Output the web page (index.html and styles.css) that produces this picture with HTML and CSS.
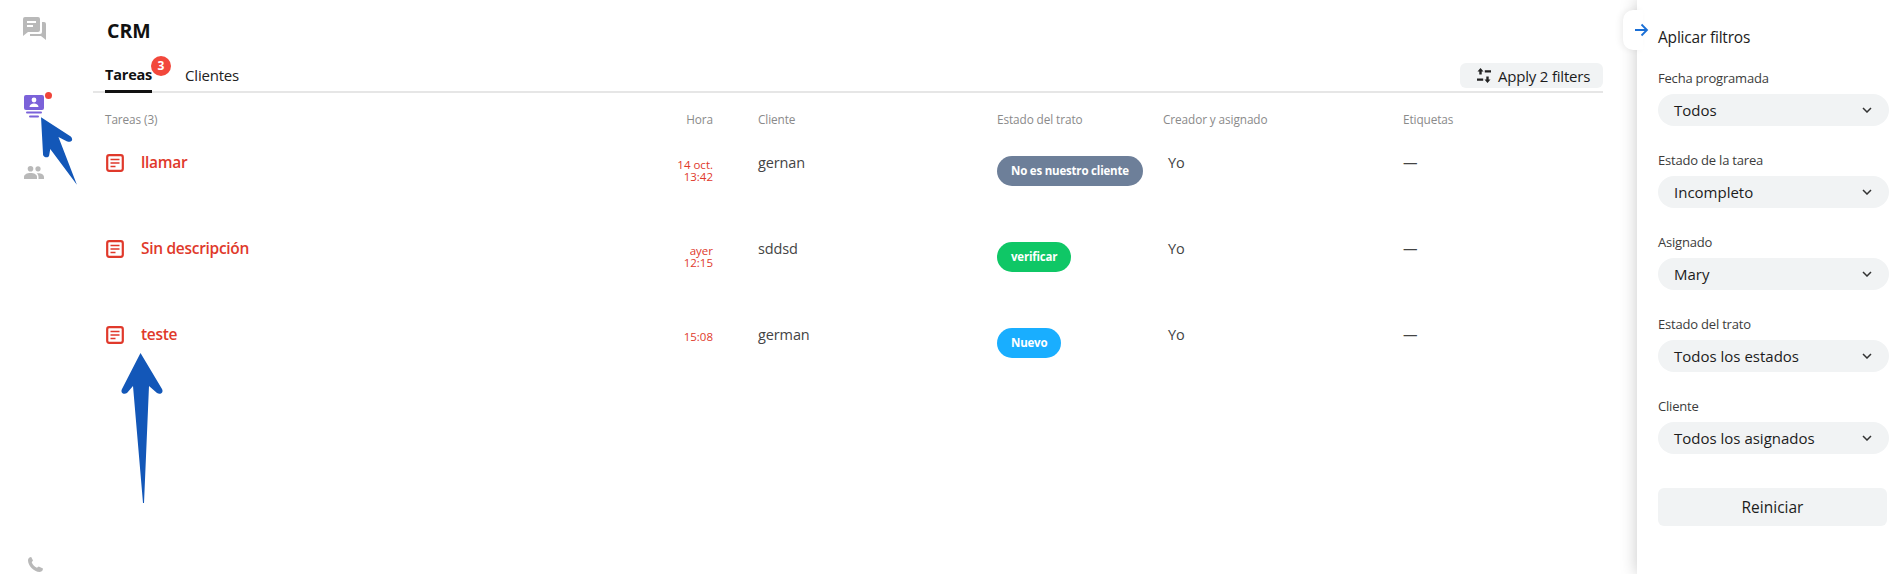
FILE: index.html
```html
<!DOCTYPE html>
<html lang="es">
<head>
<meta charset="utf-8">
<title>CRM</title>
<link rel="stylesheet" href="styles.css">
</head>
<body>
<div class="app">
  <nav class="rail">
    <svg class="rail-chat" viewBox="0 0 23 23"><path class="gray" d="M2 0h13a2 2 0 0 1 2 2v11a2 2 0 0 1-2 2H5l-5 4V2a2 2 0 0 1 2-2z"/><path class="white" d="M4 4h9v2H4zM4 8h6v2H4z"/><path class="gray" d="M19 5h2a2 2 0 0 1 2 2v16l-5-4H7v-2h10a2 2 0 0 0 2-2z"/></svg>
    <div class="rail-crm">
      <svg class="rail-crm-icon" viewBox="0 0 20 23"><rect class="purple" width="20" height="15" rx="2"/><circle class="white" cx="10" cy="5" r="2.4"/><path class="white" d="M5.500 12c0-2.400 2-3.600 4.500-3.600s4.500 1.200 4.500 3.600z"/><rect class="purple" x="2" y="16.500" width="16" height="2" rx="1"/><rect class="purple" x="5" y="20.500" width="10" height="2" rx="1"/></svg>
      <span class="rail-dot"></span>
    </div>
    <svg class="rail-people" viewBox="0 0 20 13"><circle class="gray" cx="6.500" cy="2.800" r="2.800"/><circle class="gray" cx="14" cy="2.800" r="2.600"/><path class="gray" d="M0 13v-2c0-2.500 3-4 6.500-4s6.500 1.500 6.500 4v2z"/><path class="gray" d="M14.500 13v-2c0-1.500-.6-2.700-1.800-3.700 3.800-.6 7.300 1 7.300 3.700v2z"/></svg>
    <svg class="rail-phone" viewBox="0 0 15 15"><path class="gray" d="M3.200 0 5 3.400 3.700 5.200c.9 2.400 2.700 4.300 5.200 5.500l1.800-1.300L15 11.600c0 1.800-1.300 3.400-3.200 3.400C5.500 15 0 8.400 0 3.300 0 1.500 1.400.2 3.200 0z"/></svg>
  </nav>

  <main class="main">
    <h1 class="title">CRM</h1>
    <div class="tabs">
      <div class="tab tab-active">Tareas<span class="tab-badge">3</span></div>
      <div class="tab">Clientes</div>
      <button class="apply">
        <svg class="apply-icon" viewBox="0 0 14 15"><path class="dark" d="M3.500 0 6.500 3.500H4.700V6.500H2.300V3.500H.5zM7.800 2.200H14v2.400H7.800zM0 10.400h6.200v2.400H0zM9.300 8.500h2.400v3h1.800l-3 3.500-3-3.500h1.800z"/></svg>
        Apply 2 filters
      </button>
    </div>
    <div class="table">
      <div class="cell head">Tareas (3)</div>
      <div class="cell head time">Hora</div>
      <div class="cell head">Cliente</div>
      <div class="cell head">Estado del trato</div>
      <div class="cell head">Creador y asignado</div>
      <div class="cell head">Etiquetas</div>

      <div class="cell task"><svg class="task-icon" viewBox="0 0 18 18"><rect class="doc" x="1.200" y="1.200" width="15.600" height="15.600" rx="2"/><path class="doc-lines" d="M4.500 5.500h9M4.500 9h9M4.500 12.500h5"/></svg>llamar</div>
      <div class="cell time due">14 oct.<br>13:42</div>
      <div class="cell text">gernan</div>
      <div class="cell"><span class="pill pill-gray">No es nuestro cliente</span></div>
      <div class="cell text me">Yo</div>
      <div class="cell text">—</div>

      <div class="cell task"><svg class="task-icon" viewBox="0 0 18 18"><rect class="doc" x="1.200" y="1.200" width="15.600" height="15.600" rx="2"/><path class="doc-lines" d="M4.500 5.500h9M4.500 9h9M4.500 12.500h5"/></svg>Sin descripción</div>
      <div class="cell time due">ayer<br>12:15</div>
      <div class="cell text">sddsd</div>
      <div class="cell"><span class="pill pill-green">verificar</span></div>
      <div class="cell text me">Yo</div>
      <div class="cell text">—</div>

      <div class="cell task"><svg class="task-icon" viewBox="0 0 18 18"><rect class="doc" x="1.200" y="1.200" width="15.600" height="15.600" rx="2"/><path class="doc-lines" d="M4.500 5.500h9M4.500 9h9M4.500 12.500h5"/></svg>teste</div>
      <div class="cell time due">15:08</div>
      <div class="cell text">german</div>
      <div class="cell"><span class="pill pill-blue">Nuevo</span></div>
      <div class="cell text me">Yo</div>
      <div class="cell text">—</div>
    </div>
  </main>

  <aside class="panel">
    <div class="panel-toggle"><svg class="panel-arrow" viewBox="0 0 14 14"><path d="M1 7h12M7.500 1.500 13 7l-5.500 5.500"/></svg></div>
    <h2 class="panel-title">Aplicar filtros</h2>
    <div class="field"><div class="field-label">Fecha programada</div><div class="select">Todos<svg class="chev" viewBox="0 0 10 6"><path d="M1 1l4 4 4-4"/></svg></div></div>
    <div class="field"><div class="field-label">Estado de la tarea</div><div class="select">Incompleto<svg class="chev" viewBox="0 0 10 6"><path d="M1 1l4 4 4-4"/></svg></div></div>
    <div class="field"><div class="field-label">Asignado</div><div class="select">Mary<svg class="chev" viewBox="0 0 10 6"><path d="M1 1l4 4 4-4"/></svg></div></div>
    <div class="field"><div class="field-label">Estado del trato</div><div class="select">Todos los estados<svg class="chev" viewBox="0 0 10 6"><path d="M1 1l4 4 4-4"/></svg></div></div>
    <div class="field"><div class="field-label">Cliente</div><div class="select">Todos los asignados<svg class="chev" viewBox="0 0 10 6"><path d="M1 1l4 4 4-4"/></svg></div></div>
    <button class="reset">Reiniciar</button>
  </aside>
</div>

<svg class="annot annot-one" viewBox="0 0 40 70"><path class="annot-fill" d="M1 0 30 19c2 2 2 5-1 5-1 0-2 0-3-.500l-8-4L36 66 10 31l-1 6c0 3-5 3-6 0z"/></svg>
<svg class="annot annot-two" viewBox="0 0 44 152"><path class="annot-fill" d="M20.500 0 42 36c2 4-2 6-5 4l-8-7-5 117h-1L13 33l-6 7c-3 2-7 0-5-4z"/></svg>
</body>
</html>
```
FILE: styles.css
```css
* { box-sizing: border-box; }
html, body { margin: 0; height: 574px; overflow: hidden; background: #fff; }
body { font-family: "Open Sans", "Noto Sans", sans-serif; color: #1c1c1c; position: relative; }
.app { display: flex; height: 574px; }

.gray { fill: #b9b9b9; }
.white { fill: #fff; }
.purple { fill: #7b62d9; }
.dark { fill: #222; }

.rail { width: 93px; flex: none; position: relative; display: flex; flex-direction: column; padding: 17px 0 0 23px; }
.rail-chat { width: 23px; height: 23px; }
.rail-crm { position: relative; width: 20px; height: 23px; margin: 55px 0 0 1px; }
.rail-crm-icon { width: 20px; height: 23px; display: block; }
.rail-dot { position: absolute; left: 21px; top: -3px; width: 7px; height: 7px; border-radius: 50%; background: #f0443a; }
.rail-people { width: 20px; height: 13px; margin: 48px 0 0 1px; }
.rail-phone { width: 15px; height: 15px; margin: 378px 0 0 5px; }

.main { width: 1510px; flex: none; display: flex; flex-direction: column; }
.title { margin: 0; padding: 19px 0 0 14px; font-size: 19.500px; line-height: 24px; font-weight: 700; color: #111; }
.tabs { display: flex; align-items: flex-start; height: 50px; border-bottom: 2px solid #e6e6e6; padding-left: 12px; position: relative; }
.tab { font-size: 15px; line-height: 20px; padding-top: 22px; height: 50px; margin-right: 33px; position: relative; letter-spacing: -.2px; color: #222; }
.tab-active { font-weight: 700; font-size: 14.500px; color: #111; border-bottom: 3px solid #111; }
.tab-badge { position: absolute; left: 46px; top: 13px; width: 20px; height: 20px; border-radius: 50%; background: #f2483c; color: #fff; font-size: 12px; line-height: 20px; font-weight: 700; text-align: center; letter-spacing: 0; }
.apply { margin: 20px 0 0 auto; height: 25px; width: 143px; border: 0; border-radius: 6px; background: #f1f3f4; font: 15px "Open Sans", sans-serif; letter-spacing: -.2px; color: #1c1c1c; display: flex; align-items: center; gap: 7px; padding: 0 0 0 17px; }
.apply-icon { width: 14px; height: 15px; flex: none; }

.table { display: grid; grid-template-columns: 533px 120px 239px 166px 240px 1fr; grid-template-rows: 40px 86px 86px 86px; padding-left: 12px; }
.cell { font-size: 14px; min-width: 0; }
.head { font-size: 11.800px; color: #8a8a8a; padding-top: 18px; line-height: 16px; letter-spacing: -.1px; }
.time { text-align: right; padding-right: 45px; }
.due { font-size: 11.500px; line-height: 12px; color: #e0392b; padding-top: 26px; letter-spacing: 0; }
.task { display: flex; align-items: flex-start; color: #e0392b; font-size: 15.500px; font-weight: 600; line-height: 22px; padding-top: 18px; letter-spacing: -.3px; }
.task-icon { width: 18px; height: 18px; flex: none; margin: 3px 17px 0 1px; }
.doc { fill: none; stroke: #e0392b; stroke-width: 2.200; }
.doc-lines { fill: none; stroke: #e0392b; stroke-width: 1.700; }
.text { font-size: 14.500px; line-height: 20px; padding-top: 20px; color: #444; letter-spacing: -.12px; }
.me { padding-left: 5px; }
.pill { display: inline-flex; align-items: center; height: 30px; margin-top: 22.500px; padding: 0 14px; border-radius: 15px; color: #fff; font-size: 11.500px; font-weight: 700; letter-spacing: -.2px; }
.pill-gray { background: #6d7f99; }
.pill-green { background: #0fc766; }
.pill-blue { background: #19aeff; }

.panel { width: 262px; flex: none; margin-left: 34px; height: 574px; background: #fff; box-shadow: 0 0 16px rgba(0,0,0,.22); padding: 26px 10px 0 21px; position: relative; }
.panel-toggle { position: absolute; left: -14px; top: 10px; width: 20px; height: 40px; background: #fff; border-radius: 10px 0 0 10px; box-shadow: -3px 0 6px rgba(0,0,0,.06); }
.panel-arrow { position: absolute; left: 11px; top: 13px; width: 14px; height: 14px; fill: none; stroke: #1a6fd6; stroke-width: 1.800; overflow: visible; }
.panel-title { position: relative; margin: 0 0 21px; font-size: 15.500px; font-weight: 400; line-height: 22px; color: #1c1c1c; letter-spacing: -.2px; }
.field { height: 82px; }
.field-label { font-size: 13px; line-height: 18px; color: #3c3c3c; letter-spacing: -.2px; margin-bottom: 7px; }
.select { display: flex; align-items: center; justify-content: space-between; height: 32px; width: 231px; border-radius: 16px; background: #f1f3f4; font-size: 15px; padding: 0 17px 0 16px; letter-spacing: 0; color: #1c1c1c; }
.chev { width: 10px; height: 6px; fill: none; stroke: #333; stroke-width: 1.500; }
.reset { display: block; width: 229px; height: 38px; margin-top: 9px; border: 0; border-radius: 6px; background: #f1f3f4; font: 15.500px "Open Sans", sans-serif; color: #1c1c1c; }

.annot { position: absolute; }
.annot-fill { fill: #1357b8; }
.annot-one { left: 40px; top: 117px; width: 41px; height: 72px; }
.annot-two { left: 120px; top: 353px; width: 44px; height: 152px; }
```
